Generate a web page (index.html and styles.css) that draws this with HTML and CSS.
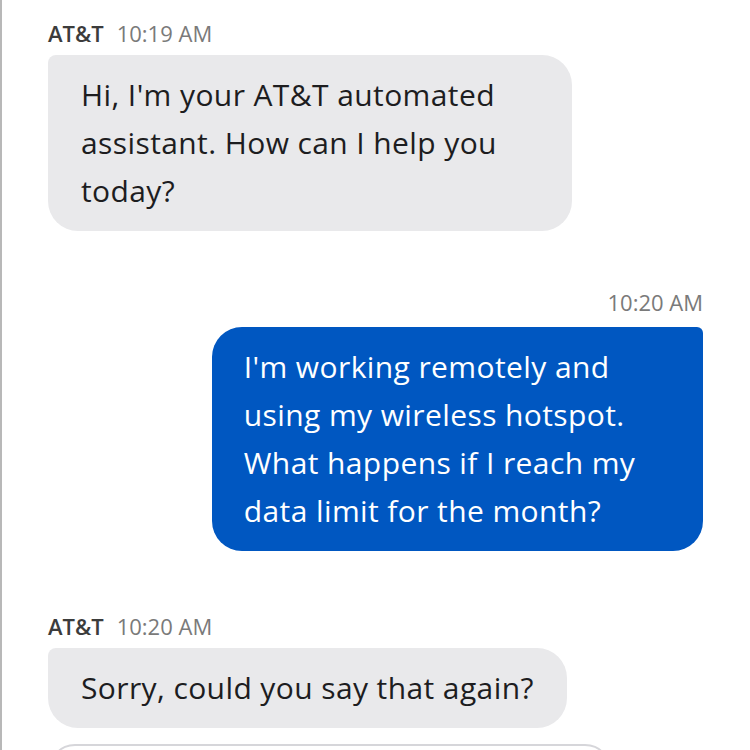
FILE: index.html
```html
<!DOCTYPE html>
<html lang="en">
<head>
    <meta charset="UTF-8">
    <meta name="viewport" content="width=device-width, initial-scale=1.0">
    <title>AT&amp;T Chat</title>
    <link rel="stylesheet" href="styles.css">
</head>
<body>

<div class="chat">
    <div class="msg bot">
        <div class="meta"><span class="sender">AT&amp;T</span><span class="time">10:19 AM</span></div>
        <div class="bubble">Hi, I'm your AT&amp;T automated assistant. How can I help you today?</div>
    </div>

    <div class="msg user">
        <div class="meta"><span class="time">10:20 AM</span></div>
        <div class="bubble">I'm working remotely and using my wireless hotspot. What happens if I reach my data limit for the month?</div>
    </div>

    <div class="msg bot">
        <div class="meta"><span class="sender">AT&amp;T</span><span class="time">10:20 AM</span></div>
        <div class="bubble">Sorry, could you say that again?</div>
    </div>

    <div class="quick-reply"></div>
</div>

</body>
</html>
```

FILE: styles.css
```css
body {
    margin: 0;
    background-color: #fff;
    font-family: "Open Sans", Lato, sans-serif;
    border-left: 2px solid #b8b8b8;
    min-height: 750px;
    box-sizing: border-box;
}
.chat {
    display: flex;
    flex-direction: column;
    padding: 21px 47px 0 46px;
}
.msg {
    display: flex;
    flex-direction: column;
}
.msg.user {
    align-items: flex-end;
    margin-top: 59px;
}
.msg.bot + .msg.bot,
.msg.user + .msg.bot {
    margin-top: 63px;
}
.meta {
    font-size: 22px;
    line-height: 24px;
    color: #7a7a7a;
    margin-bottom: 10px;
}
.msg.user .meta {
    margin-bottom: 13px;
}
.sender {
    font-weight: 600;
    color: #3c3c3c;
    margin-right: 13px;
}
.bubble {
    font-size: 30px;
    line-height: 48px;
    letter-spacing: 0.4px;
    padding: 16px 33px;
}
.bot .bubble {
    align-self: flex-start;
    max-width: 80%;
    box-sizing: border-box;
    background-color: #e9e9eb;
    color: #1d1d1f;
    border-radius: 8px 30px 30px 30px;
}
.user .bubble {
    max-width: 75%;
    box-sizing: border-box;
    background-color: #0057c1;
    color: #fff;
    border-radius: 30px 6px 30px 30px;
    padding-left: 32px;
}
.quick-reply {
    margin-top: 16px;
    width: 560px;
    height: 50px;
    border: 2px solid #d6d6da;
    border-radius: 28px;
}
```
